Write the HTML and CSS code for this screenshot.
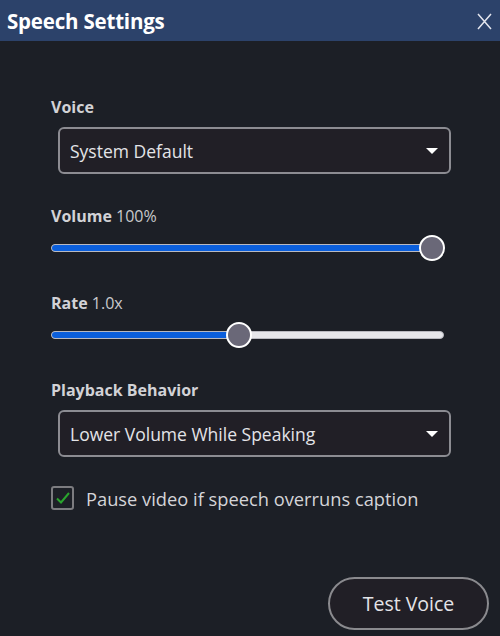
FILE: index.html
```html
<!DOCTYPE html>
<html>
<head>
<meta charset="utf-8">
<link rel="stylesheet" href="styles.css">
</head>
<body>
<div class="dialog">
  <header class="titlebar">
    <h1 class="title">Speech Settings</h1>
    <span class="close">
      <svg width="15" height="17" viewBox="0 0 15 17"><path d="M1 1 L14 16 M14 1 L1 16" stroke="#e4e6ee" stroke-width="1.5" fill="none"/></svg>
    </span>
  </header>
  <main class="content">
    <div class="label label-voice"><b>Voice</b></div>
    <div class="select select-voice">
      <span>System Default</span>
      <span class="caret"></span>
    </div>

    <div class="label label-volume"><b>Volume</b> 100%</div>
    <div class="slider slider-volume">
      <div class="track"><div class="fill" style="width: 97%"></div></div>
      <div class="thumb" style="left: 97%"></div>
    </div>

    <div class="label label-rate"><b>Rate</b> 1.0x</div>
    <div class="slider slider-rate">
      <div class="track"><div class="fill" style="width: 47.8%"></div></div>
      <div class="thumb" style="left: 47.8%"></div>
    </div>

    <div class="label label-playback"><b>Playback Behavior</b></div>
    <div class="select select-playback">
      <span>Lower Volume While Speaking</span>
      <span class="caret"></span>
    </div>

    <label class="check-row">
      <span class="checkbox">
        <svg width="16" height="14" viewBox="0 0 16 14"><path d="M2 7.5 L6 11.5 L14 2" stroke="#2aa52e" stroke-width="2" fill="none"/></svg>
      </span>
      <span class="check-text">Pause video if speech overruns caption</span>
    </label>

    <div class="actions">
      <button class="btn">Test Voice</button>
    </div>
  </main>
</div>
</body>
</html>
```
FILE: styles.css
```css
* { box-sizing: border-box; }
html, body {
  margin: 0;
  padding: 0;
  width: 500px;
  height: 636px;
  overflow: hidden;
  background: #1c1f26;
  font-family: "Open Sans", "Noto Sans", sans-serif;
  color: #d6d6da;
}
.dialog {
  display: flex;
  flex-direction: column;
  height: 636px;
}
.titlebar {
  height: 41px;
  background: #2c426a;
  display: flex;
  align-items: center;
  justify-content: space-between;
  padding: 0 8px 0 7px;
}
.title {
  margin: 0;
  font-size: 20.5px;
  font-weight: 700;
  color: #ffffff;
  letter-spacing: -0.2px;
}
.close {
  display: flex;
  align-items: center;
  margin-top: 1px;
}
.content {
  display: flex;
  flex-direction: column;
  padding: 0 0 0 51px;
}
.label {
  height: 20px;
  line-height: 20px;
  font-size: 16px;
  color: #c9c9cd;
}
.label b {
  font-weight: 700;
  color: #d2d2d6;
}
.label-voice { margin-top: 56px; }
.label-volume { margin-top: 32px; }
.label-rate { margin-top: 32px; }
.label-playback { margin-top: 32px; }

.select {
  margin-top: 10px;
  margin-left: 7px;
  width: 393px;
  height: 47px;
  border: 2px solid #8c8c92;
  border-radius: 6px;
  background: #211f26;
  display: flex;
  align-items: center;
  justify-content: space-between;
  padding: 0 11px 0 10px;
  font-size: 17.5px;
  color: #e4e4e8;
}
.caret {
  width: 0;
  height: 0;
  border-left: 6px solid transparent;
  border-right: 6px solid transparent;
  border-top: 6px solid #ffffff;
  margin-top: 1px;
}

.slider {
  position: relative;
  width: 393px;
  height: 26px;
  margin-top: 9px;
  display: flex;
  align-items: center;
}
.track {
  width: 100%;
  height: 8px;
  border-radius: 4px;
  background: #e6e6ea;
  border: 1px solid #b9b9c0;
  overflow: hidden;
}
.fill {
  height: 100%;
  background: #0b5fdc;
}
.thumb {
  position: absolute;
  top: 0;
  width: 26px;
  height: 26px;
  margin-left: -13px;
  border-radius: 50%;
  background: #6a6878;
  border: 2.5px solid #ffffff;
}

.check-row {
  margin-top: 29px;
  display: flex;
  align-items: center;
  height: 24px;
}
.checkbox {
  width: 23px;
  height: 24px;
  border: 2px solid #7c7c80;
  border-radius: 3px;
  display: flex;
  align-items: center;
  justify-content: center;
}
.check-text {
  margin-left: 12px;
  font-size: 18.3px;
  color: #d4d4d8;
}
.actions {
  margin-top: 67px;
  display: flex;
  justify-content: flex-end;
  padding-right: 11px;
}
.btn {
  width: 161px;
  height: 53px;
  border-radius: 27px;
  border: 2px solid #8a8a8e;
  background: #211f26;
  color: #e4e4e8;
  font-family: "Open Sans", "Noto Sans", sans-serif;
  font-size: 19.5px;
}
```
